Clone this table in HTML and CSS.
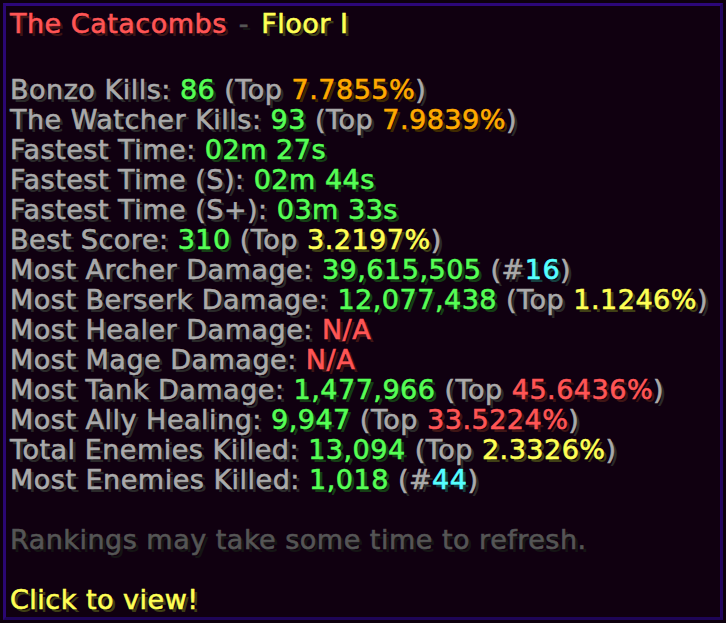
FILE: index.html
```html
<!DOCTYPE html>
<html lang="en">
<head>
    <meta charset="UTF-8">
    <meta name="viewport" content="width=device-width, initial-scale=1.0">
    <title>The Catacombs - Floor I</title>
    <link rel="stylesheet" href="styles.css">
</head>
<body>
    <div class="tooltip">
        <p class="line title">
            <span class="red">The Catacombs</span> <span class="dark">-</span> <span class="yellow">Floor I</span>
        </p>
        <p class="line blank"></p>
        <p class="line">Bonzo Kills: <span class="green">86</span> (Top <span class="gold">7.7855%</span>)</p>
        <p class="line">The Watcher Kills: <span class="green">93</span> (Top <span class="gold">7.9839%</span>)</p>
        <p class="line">Fastest Time: <span class="green">02m 27s</span></p>
        <p class="line">Fastest Time (S): <span class="green">02m 44s</span></p>
        <p class="line">Fastest Time (S+): <span class="green">03m 33s</span></p>
        <p class="line">Best Score: <span class="green">310</span> (Top <span class="yellow">3.2197%</span>)</p>
        <p class="line">Most Archer Damage: <span class="green">39,615,505</span> (#<span class="aqua">16</span>)</p>
        <p class="line">Most Berserk Damage: <span class="green">12,077,438</span> (Top <span class="yellow">1.1246%</span>)</p>
        <p class="line">Most Healer Damage: <span class="red">N/A</span></p>
        <p class="line">Most Mage Damage: <span class="red">N/A</span></p>
        <p class="line">Most Tank Damage: <span class="green">1,477,966</span> (Top <span class="red">45.6436%</span>)</p>
        <p class="line">Most Ally Healing: <span class="green">9,947</span> (Top <span class="red">33.5224%</span>)</p>
        <p class="line">Total Enemies Killed: <span class="green">13,094</span> (Top <span class="yellow">2.3326%</span>)</p>
        <p class="line">Most Enemies Killed: <span class="green">1,018</span> (#<span class="aqua">44</span>)</p>
        <p class="line blank"></p>
        <p class="line dark">Rankings may take some time to refresh.</p>
        <p class="line blank"></p>
        <p class="line yellow">Click to view!</p>
    </div>
</body>
</html>
```

FILE: styles.css
```css
body {
    margin: 0;
    padding: 3px;
    background-color: #0d000d;
    font-family: "DejaVu Sans", sans-serif;
}
.tooltip {
    box-sizing: border-box;
    width: 720px;
    height: 617px;
    padding: 3px 4px;
    border: 3px solid;
    border-color: #2c0779 #22065f #1e0556 #2a0773;
    background-color: #100010;
    color: #aaaaaa;
    text-shadow: 3px 3px 0 #2a2a2a;
}
.line {
    margin: 0;
    height: 30px;
    line-height: 30px;
    font-size: 27px;
    letter-spacing: 0.5px;
    white-space: nowrap;
    -webkit-text-stroke: 0.6px currentColor;
}
.title {
    margin-bottom: 6px;
}
.title .dark {
    padding: 0 3px;
}
.red { color: #ff5555; text-shadow: 3px 3px 0 #3f1515; }
.yellow { color: #ffff55; text-shadow: 3px 3px 0 #3f3f15; }
.green { color: #55ff55; text-shadow: 3px 3px 0 #153f15; }
.gold { color: #ffaa00; text-shadow: 3px 3px 0 #3f2a00; }
.aqua { color: #55ffff; text-shadow: 3px 3px 0 #153f3f; }
.dark { color: #555555; text-shadow: 3px 3px 0 #151515; }
```
